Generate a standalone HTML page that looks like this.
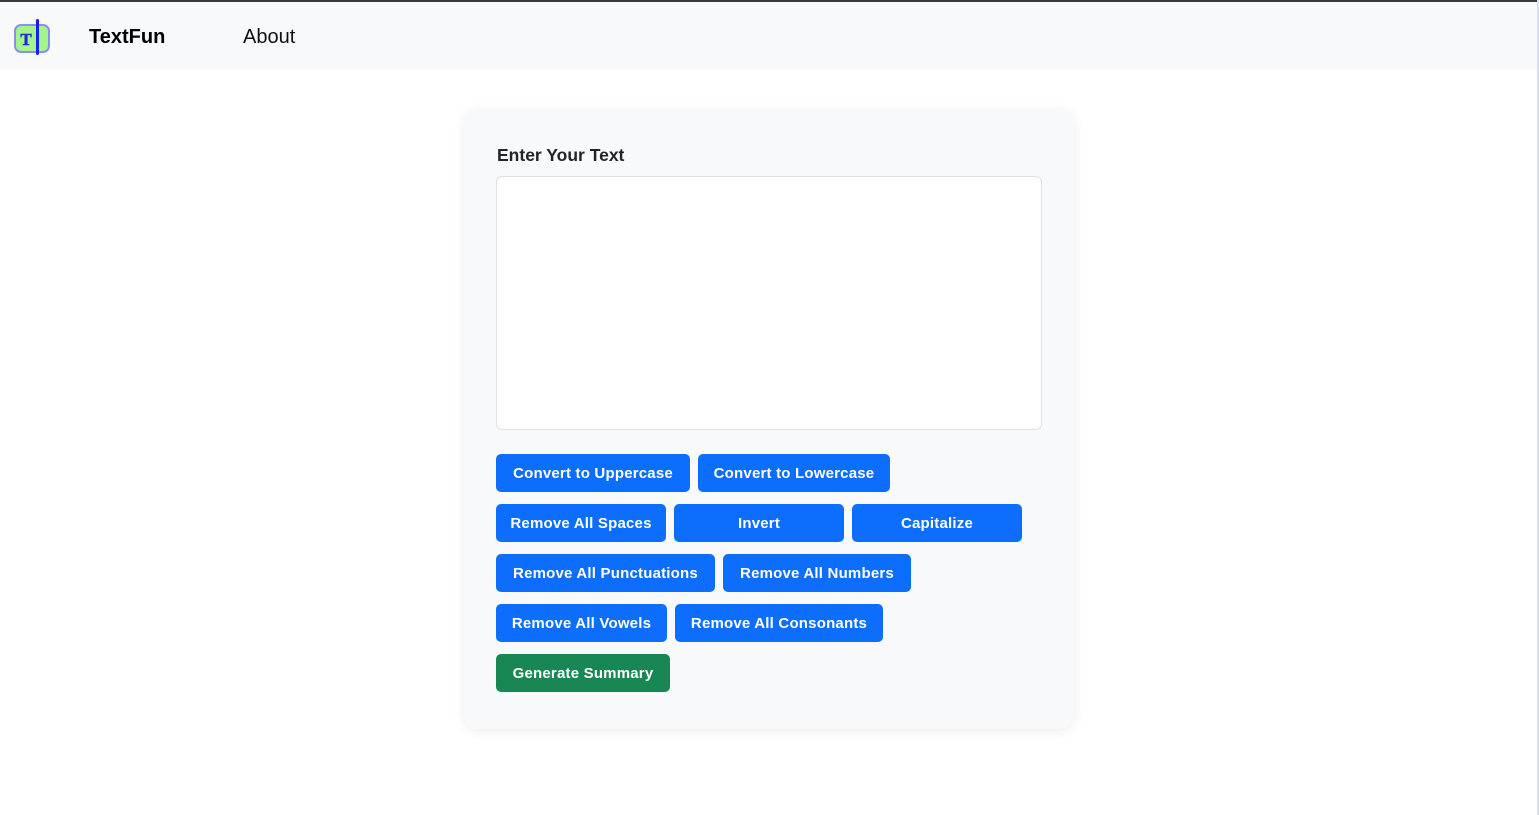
<!DOCTYPE html>
<html><head><meta charset="utf-8"><style>
*{box-sizing:border-box;margin:0;padding:0}
html,body{width:1539px;height:815px;overflow:hidden;background:#fff;font-family:"Liberation Sans",sans-serif}
.top{position:absolute;left:0;top:0;width:1539px;height:2px;background:#3a3a3a}
.rb{position:absolute;right:0;top:0;width:2px;height:815px;background:#dde0ea}
nav{position:absolute;left:0;top:2px;width:1537px;height:67px;background:#f8f9fa}
.brand{position:absolute;left:89px;top:24px;font-size:20px;font-weight:bold;color:#000}
.about{position:absolute;left:243px;top:24px;font-size:20px;color:#111}
.card{position:absolute;left:464px;top:109px;width:610px;height:620px;background:#f8f9fa;border-radius:14px;box-shadow:0 2px 12px rgba(0,0,0,.08)}
.lbl{position:absolute;left:497px;top:145px;font-size:17.5px;font-weight:bold;color:#212529}
.ta{position:absolute;left:496px;top:176px;width:546px;height:254px;background:#fff;border:1px solid #dee2e6;border-radius:6px}
.b{position:absolute;height:38px;border-radius:5px;background:#0d6efd;color:#fff;font-size:15px;font-weight:bold;display:flex;align-items:center;justify-content:center;white-space:nowrap;letter-spacing:.2px}
.g{background:#198754}
</style></head><body>
<div class="top"></div>
<nav>
<svg style="position:absolute;left:13px;top:14px" width="38" height="40" viewBox="0 0 38 40">
<rect x="2" y="9" width="34" height="27" rx="6" fill="#a3f58a" stroke="#8a8ff0" stroke-width="2"/>
<text x="13" y="29" font-family="Liberation Serif,serif" font-weight="bold" font-size="17" fill="#1f2bd0" text-anchor="middle" stroke="#1f2bd0" stroke-width=".5">T</text>
<rect x="23" y="3" width="3" height="36" rx="1.5" fill="#1a1ef0"/>
</svg>
<div class="brand">TextFun</div>
<div class="about">About</div>
</nav>
<div class="rb"></div>
<div class="card"></div>
<div class="lbl">Enter Your Text</div>
<div class="ta"></div>
<div class="b" style="left:496px;top:454px;width:194px">Convert to Uppercase</div>
<div class="b" style="left:698px;top:454px;width:192px">Convert to Lowercase</div>
<div class="b" style="left:496px;top:504px;width:170px">Remove All Spaces</div>
<div class="b" style="left:674px;top:504px;width:170px">Invert</div>
<div class="b" style="left:852px;top:504px;width:170px">Capitalize</div>
<div class="b" style="left:496px;top:554px;width:219px">Remove All Punctuations</div>
<div class="b" style="left:723px;top:554px;width:188px">Remove All Numbers</div>
<div class="b" style="left:496px;top:604px;width:171px">Remove All Vowels</div>
<div class="b" style="left:675px;top:604px;width:208px">Remove All Consonants</div>
<div class="b g" style="left:496px;top:654px;width:174px">Generate Summary</div>
</body></html>
